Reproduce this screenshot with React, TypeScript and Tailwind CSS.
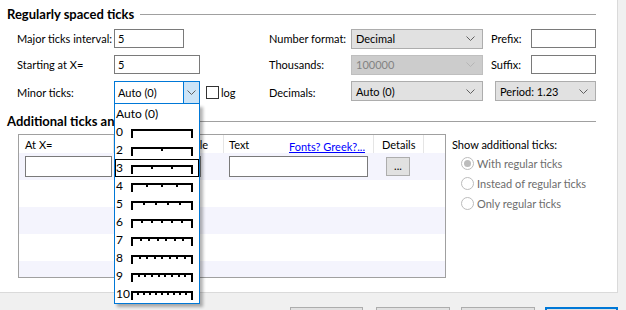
import React from 'react';

function Chevron({ muted }: { muted?: boolean }) {
  return (
    <svg width="9" height="5" viewBox="0 0 9 5" className="shrink-0">
      <polyline points="0.5,0.5 4.5,4.5 8.5,0.5" fill="none" stroke={muted ? '#b5b5b5' : '#606060'} strokeWidth="1" />
    </svg>
  );
}

function Select({ value, disabled, className = '' }: { value: string; disabled?: boolean; className?: string }) {
  return (
    <div
      className={`flex items-center justify-between h-[20px] border pl-[4px] pr-[7px] ${
        disabled ? 'bg-[#cccccc] border-[#bfbfbf] text-[#838383]' : 'bg-[#e1e1e1] border-[#adadad]'
      } ${className}`}
    >
      <span>{value}</span>
      <Chevron muted={disabled} />
    </div>
  );
}

function TextBox({ value = '', className = '' }: { value?: string; className?: string }) {
  return (
    <div className={`flex items-center h-[19px] border border-[#7a7a7a] bg-white pl-[3px] ${className}`}>
      {value}
    </div>
  );
}

function Ruler({ n }: { n: number }) {
  const ticks: number[] = [];
  for (let i = 1; i < n; i++) ticks.push(Math.round((i * 60) / n));
  return (
    <svg width="62" height="9" viewBox="0 0 62 9" className="mt-[3px] shrink-0">
      <rect x="0" y="0" width="62" height="2" fill="#000" />
      <rect x="0" y="0" width="2" height="9" fill="#000" />
      <rect x="60" y="0" width="2" height="9" fill="#000" />
      {ticks.map((x) => (
        <rect key={x} x={x} y="0" width="2" height="4" fill="#000" />
      ))}
    </svg>
  );
}

function Radio({ label, checked }: { label: string; checked?: boolean }) {
  return (
    <div className="flex items-center h-[20px] pl-[9px] text-[#6d6d6d]">
      <div className="flex items-center justify-center w-[13px] h-[13px] rounded-full border border-[#bcbcbc] bg-white">
        {checked && <div className="w-[7px] h-[7px] rounded-full bg-[#bcbcbc]" />}
      </div>
      <span className="ml-[3px]">{label}</span>
    </div>
  );
}

const minorOptions = [0, 2, 3, 4, 5, 6, 7, 8, 9, 10];

function MinorTicksList() {
  return (
    <div className="absolute left-[114px] top-[104px] w-[86px] bg-white border-x border-b border-[#0078d7] pt-[1px] text-[12px] shadow-[3px_3px_3px_rgba(0,0,0,0.3)]">
      <div className="flex items-center h-[18px] pl-[1px]">Auto (0)</div>
      {minorOptions.map((n) => (
        <div
          key={n}
          className={`flex items-center h-[18px] border ${n === 3 ? 'border-black' : 'border-transparent'}`}
        >
          <span className="w-[15px] shrink-0">{n}</span>
          <Ruler n={n} />
        </div>
      ))}
    </div>
  );
}

function SectionHeading({ title, className = '' }: { title: string; className?: string }) {
  return (
    <div className={`flex items-center h-[16px] pl-[7px] pr-[21px] ${className}`}>
      <span className="font-bold text-[13px]">{title}</span>
      <div className="ml-[6px] flex-1 h-px bg-[#a0a0a0]" />
    </div>
  );
}

const bodyRows = [0, 1, 2, 3, 4];

export default function App() {
  return (
    <div className="relative w-[626px] h-[310px] overflow-hidden whitespace-nowrap bg-[#f0f0f0] text-[11px] leading-none text-black font-['Lato',sans-serif]">
      <div className="flex flex-col w-[618px] h-[293px] bg-white border-r border-b border-[#dadada]">
        <SectionHeading title="Regularly spaced ticks" className="mt-[6px]" />

        <div className="grid grid-cols-[97px_155px_82px_132px_8px_40px_65px] grid-rows-[19px_19px_23px] gap-y-[7px] pl-[17px] mt-[7px] items-center">
          <span>Major ticks interval:</span>
          <TextBox value="5" className="w-[70px]" />
          <span>Number format:</span>
          <Select value="Decimal" />
          <span />
          <span>Prefix:</span>
          <TextBox />

          <span>Starting at X=</span>
          <TextBox value="5" className="w-[86px]" />
          <span>Thousands:</span>
          <Select value="100000" disabled />
          <span />
          <span>Suffix:</span>
          <TextBox />

          <span>Minor ticks:</span>
          <div className="flex items-center self-start">
            <div className="flex items-center w-[86px] h-[23px] border border-[#0078d7] bg-white">
              <span className="flex-1 pl-[3px]">Auto (0)</span>
              <div className="flex items-center justify-center w-[16px] h-full bg-[#cce4f7] border-l border-[#0078d7]">
                <Chevron />
              </div>
            </div>
            <div className="ml-[6px] w-[13px] h-[13px] border border-[#333333] bg-white" />
            <span className="ml-[2px]">log</span>
          </div>
          <span>Decimals:</span>
          <Select value="Auto (0)" className="self-start" />
          <span />
          <Select value="Period: 1.23" className="col-span-2 ml-[4px] self-start" />
        </div>

        <SectionHeading title="Additional ticks and grid lines" className="mt-[9px]" />

        <div className="flex mt-[5px]">
          <div className="ml-[18px] w-[428px] h-[144px] border border-[#a0a0a0] flex flex-col overflow-hidden">
            <div className="flex h-[18px] shrink-0">
              <div className="w-[95px] border-r border-[#e5e5e5] pl-[6px] flex items-center">At X=</div>
              <div className="w-[110px] border-r border-[#e5e5e5] pl-[8px] flex items-center">Tick and line style</div>
              <div className="w-[150px] border-r border-[#e5e5e5] pl-[5px] pr-[8px] flex items-center justify-between">
                <span>Text</span>
                <span className="self-end pb-[1px] text-[#0000ff] underline">Fonts? Greek?...</span>
              </div>
              <div className="w-[50px] border-r border-[#e5e5e5] pl-[8px] flex items-center">Details</div>
            </div>
            {bodyRows.map((r) => (
              <div
                key={r}
                className={`flex items-center h-[27px] shrink-0 ${r % 2 === 0 ? 'bg-[#f4f4fd]' : 'bg-white'}`}
              >
                {r === 0 && (
                  <>
                    <div className="w-[95px] pl-[6px]">
                      <TextBox className="w-[87px] h-[21px]" />
                    </div>
                    <div className="w-[110px] pl-[6px]">
                      <TextBox className="w-[81px] h-[21px]" />
                    </div>
                    <div className="w-[150px] pl-[5px]">
                      <TextBox className="w-[139px] h-[21px]" />
                    </div>
                    <div className="w-[50px] pl-[12px]">
                      <div className="flex items-center justify-center w-[24px] h-[19px] bg-[#e1e1e1] border border-[#adadad] pb-[3px]">
                        ...
                      </div>
                    </div>
                  </>
                )}
              </div>
            ))}
          </div>

          <div className="ml-[6px] flex flex-col">
            <div className="flex items-center h-[18px] mt-[1px]">Show additional ticks:</div>
            <Radio label="With regular ticks" checked />
            <Radio label="Instead of regular ticks" />
            <Radio label="Only regular ticks" />
          </div>
        </div>
      </div>

      <div className="flex pl-[290px] mt-[14px]">
        <div className="w-[73px] h-[23px] bg-[#e1e1e1] border border-[#adadad] flex items-center justify-center">Defaults</div>
        <div className="ml-[13px] w-[74px] h-[23px] bg-[#e1e1e1] border border-[#adadad] flex items-center justify-center">Help</div>
        <div className="ml-[11px] w-[74px] h-[23px] bg-[#e1e1e1] border border-[#adadad] flex items-center justify-center">Cancel</div>
        <div className="ml-[10px] w-[73px] h-[23px] bg-[#e1e1e1] border-2 border-[#0078d7] flex items-center justify-center">OK</div>
      </div>

      <MinorTicksList />
    </div>
  );
}
